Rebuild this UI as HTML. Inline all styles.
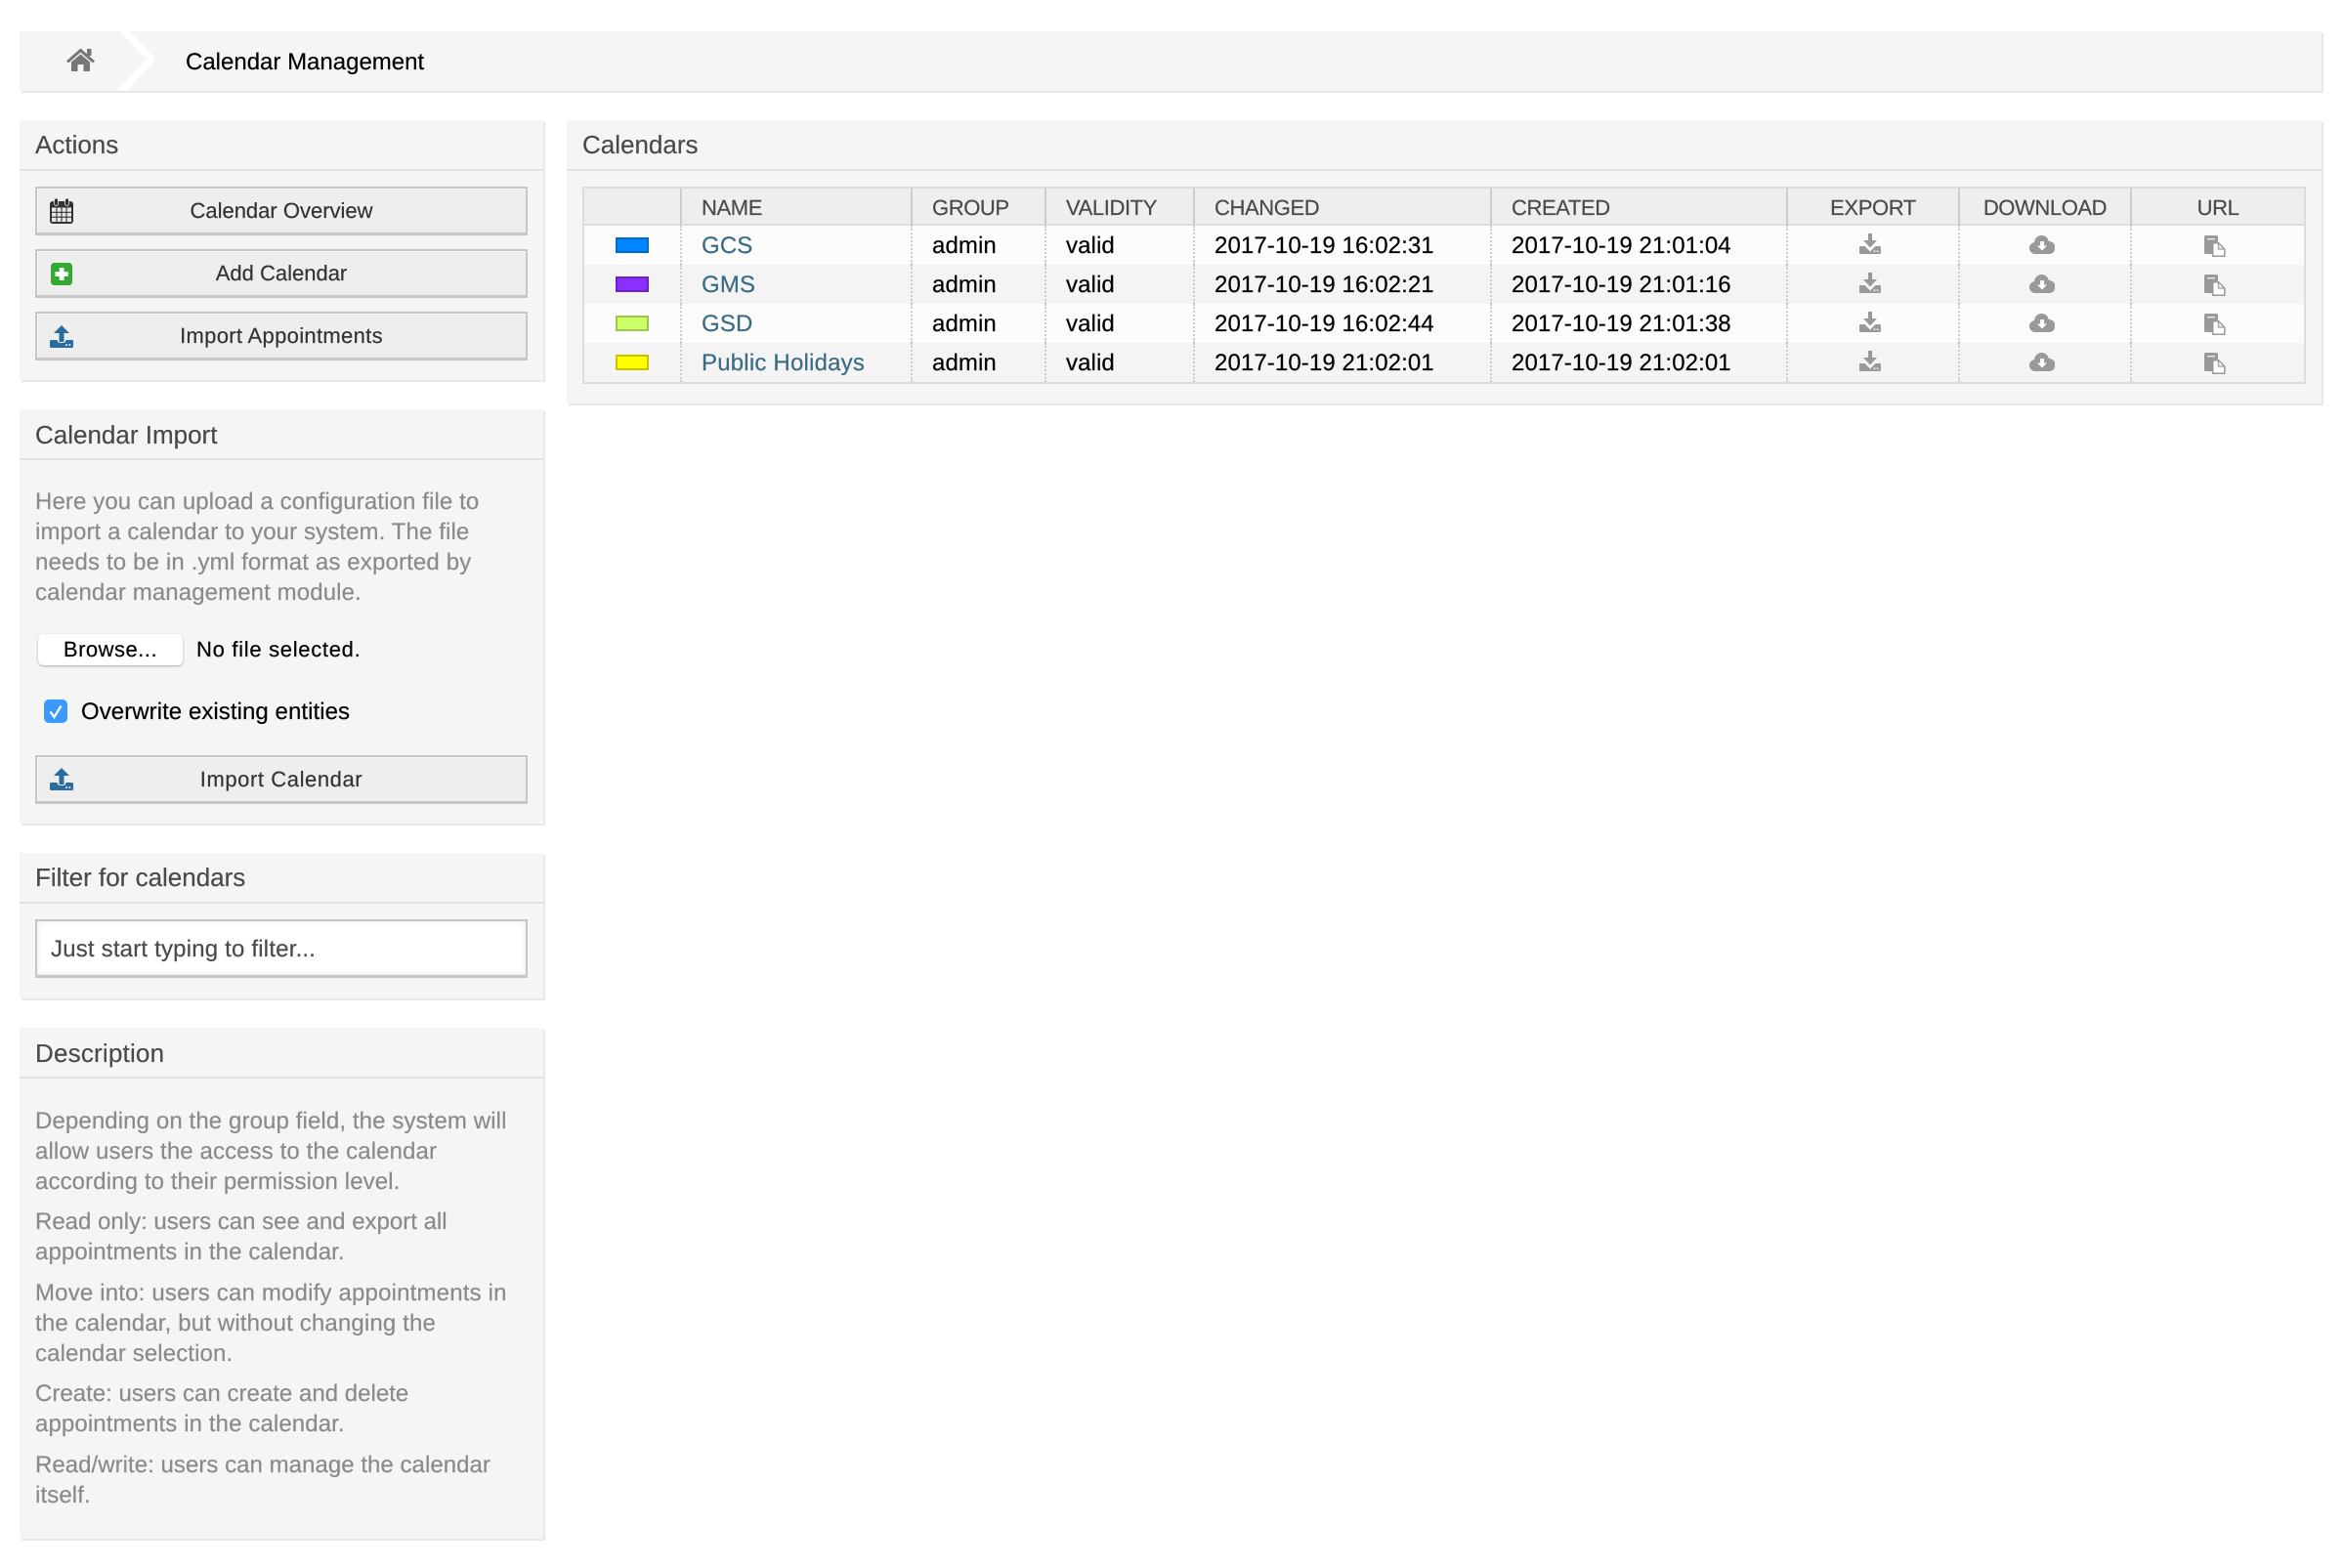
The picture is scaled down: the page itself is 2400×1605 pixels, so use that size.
<!DOCTYPE html>
<html lang="en">
<head>
<meta charset="utf-8">
<title>Calendar Management</title>
<style>
html,body{margin:0;padding:0;background:#fff;}
body{position:relative;width:2400px;height:1605px;overflow:hidden;font-family:"Liberation Sans",Arial,sans-serif;font-size:24px;text-rendering:geometricPrecision;color:#000;-webkit-text-stroke:.2px;}
.box{position:absolute;background:#f5f5f5;box-shadow:2px 2px 0 #e8e8e8;}
.line{position:absolute;left:20px;height:2px;background:#e0e0e0;}
.t{position:absolute;white-space:nowrap;line-height:30px;}
.h{font-size:26px;color:#4a4a4a;text-shadow:0 1px 0 #fff;}
.g{color:#8a8a8a;left:36px;letter-spacing:.11px;}
.btn{position:absolute;left:36px;width:504px;height:50px;box-sizing:border-box;background:#eee;border:2px solid #c6c6c6;border-bottom-width:3px;box-shadow:inset 1px 1px 0 #f8f8f8;}
.bt{left:36px;width:504px;text-align:center;font-size:22px;color:#333;}
.sys{letter-spacing:.58px;}
svg{position:absolute;display:block;}
#tw{position:absolute;left:596px;top:191px;width:1764px;height:202px;box-sizing:border-box;border:2px solid #ddd;}
table{border-collapse:separate;border-spacing:0;table-layout:fixed;width:1760px;}
th{font-size:22px;font-weight:normal;color:#4a4a4a;background:#eee;text-align:left;line-height:25px;padding:7px 0 4px 20px;border-left:2px solid #ccc;border-bottom:2px solid #ddd;white-space:nowrap;letter-spacing:-.4px;}
th.c{text-align:center;padding-left:0;}
td{position:relative;line-height:27px;padding:7px 0 6px 20px;border-left:2px dotted #ccc;vertical-align:top;white-space:nowrap;letter-spacing:.1px;}
th:first-child,td:first-child{border-left:0;padding:0;}
th:first-child{height:36px;}
tr.o td{background:#fcfcfc;}
tr.e td{background:#f4f4f4;}
a{color:#3a6b85;text-decoration:none;letter-spacing:.15px;}
.sw{position:absolute;left:32px;top:12px;width:34px;height:16px;box-sizing:border-box;border:2px solid;}
</style>
</head>
<body>
<svg width="0" height="0" style="position:absolute">
<defs>
<symbol id="exp" viewBox="0 0 22 21"><rect x="9" y="0" width="4" height="8" fill="#999"/><polygon points="4,7 18,7 11,14.5" fill="#999"/><path d="M1.5,13H5.5L11,18.5L16.5,13H20.5Q22,13 22,14.5V19.5Q22,21 20.5,21H1.5Q0,21 0,19.5V14.5Q0,13 1.5,13Z" fill="#999"/><circle cx="15.5" cy="18.2" r="1" fill="#eee"/><circle cx="18.6" cy="18.2" r="1" fill="#eee"/></symbol>
<symbol id="cld" viewBox="0 0 26 19"><circle cx="12.5" cy="7.5" r="7.5" fill="#999"/><circle cx="6" cy="13" r="6" fill="#999"/><circle cx="20" cy="12.5" r="6.5" fill="#999"/><rect x="6" y="10" width="14" height="9" fill="#999"/><rect x="11" y="6" width="4" height="5" fill="#fff"/><polygon points="8,10.5 18,10.5 13,15.5" fill="#fff"/></symbol>
<symbol id="fil" viewBox="0 0 22 22"><path d="M1.5,0H12.5Q14,0 14,1.5V19H1.5Q0,19 0,17.5V1.5Q0,0 1.5,0Z" fill="#999"/><rect x="3" y="3" width="8" height="1.3" fill="#eee"/><path d="M8.7,7.7H14.5L20.8,14V21.2H8.7Z" fill="#fdfdfd" stroke="#999" stroke-width="1.5"/><path d="M14.5,8V14H20.5" fill="none" stroke="#999" stroke-width="1.2"/></symbol>
<symbol id="upl" viewBox="0 0 24 23"><polygon points="12,0 20,8 4,8" fill="#2a6c9e"/><path d="M1.5,15H22.5Q24,15 24,16.5V21.5Q24,23 22.5,23H1.5Q0,23 0,21.5V16.5Q0,15 1.5,15Z" fill="#2a6c9e"/><rect x="7.5" y="12" width="9" height="6" rx="3" fill="#eee"/><rect x="9.5" y="7" width="5" height="10" fill="#2a6c9e"/><circle cx="17" cy="20" r="1" fill="#eee"/><circle cx="20.3" cy="20" r="1" fill="#eee"/></symbol>
</defs>
</svg>

<div class="box" style="left:20px;top:32px;width:2356px;height:61px;"></div>
<svg style="left:0;top:0" width="200" height="100" viewBox="0 0 200 100">
<polygon points="122,32 132,32 160,61 130,93 119,93 150,61" fill="#fff"/>
<path d="M69,63.5L82.5,51.5L96,63.5" fill="none" stroke="#777" stroke-width="3"/>
<rect x="89" y="50" width="4.5" height="7" fill="#777"/>
<path d="M73,63.5L82.5,55.5L92,63.5V73H85.5V66H79.5V73H73Z" fill="#777"/>
</svg>
<div class="t" style="left:190px;top:49px;">Calendar Management</div>

<!-- Actions -->
<div class="box" style="left:20px;top:123px;width:536px;height:266px;"></div>
<div class="line" style="top:173px;width:536px;"></div>
<div class="t h" style="left:36px;top:133px;">Actions</div>
<div class="btn" style="top:191px;"></div>
<div class="t bt" style="top:201px;">Calendar Overview</div>
<svg style="left:51px;top:203px" width="24" height="26" viewBox="0 0 24 26">
<rect x="0" y="3" width="24" height="23" rx="3" fill="#333"/>
<rect x="2" y="9.5" width="20" height="14.5" fill="#e8e8e8"/>
<path d="M7,9.5V24M12,9.5V24M17,9.5V24M2,14.3H22M2,19.2H22" stroke="#333" stroke-width="1.1"/>
<rect x="4.5" y="0" width="4" height="7.5" rx="2" fill="#333" stroke="#eee" stroke-width=".8"/>
<rect x="15.5" y="0" width="4" height="7.5" rx="2" fill="#333" stroke="#eee" stroke-width=".8"/>
</svg>
<div class="btn" style="top:255px;"></div>
<div class="t bt" style="top:265px;">Add Calendar</div>
<svg style="left:52px;top:269px" width="22" height="23" viewBox="0 0 22 23">
<rect width="22" height="23" rx="3.5" fill="#33aa33"/>
<rect x="8.7" y="5" width="4.8" height="13" fill="#fff"/>
<rect x="4.5" y="9.2" width="13.2" height="4.8" fill="#fff"/>
</svg>
<div class="btn" style="top:319px;"></div>
<div class="t bt" style="top:329px;letter-spacing:.32px;">Import Appointments</div>
<svg style="left:51px;top:333px" width="24" height="23"><use href="#upl"/></svg>

<!-- Calendar Import -->
<div class="box" style="left:20px;top:419px;width:536px;height:424px;"></div>
<div class="line" style="top:469px;width:536px;"></div>
<div class="t h" style="left:36px;top:430px;">Calendar Import</div>
<div class="t g" style="top:499px;">Here you can upload a configuration file to</div>
<div class="t g" style="top:530px;">import a calendar to your system. The file</div>
<div class="t g" style="top:561px;letter-spacing:.15px;">needs to be in .yml format as exported by</div>
<div class="t g" style="top:592px;">calendar management module.</div>
<div style="position:absolute;left:39px;top:649px;width:148px;height:32px;background:#fff;border-radius:5px;box-shadow:0 1px 2px rgba(0,0,0,.3);"></div>
<div class="t sys" style="left:39px;width:148px;text-align:center;top:650px;font-size:22px;letter-spacing:.5px;">Browse...</div>
<div class="t sys" style="left:201px;top:650px;font-size:22px;letter-spacing:.7px;">No file selected.</div>
<div style="position:absolute;left:45px;top:716px;width:24px;height:24px;background:#3b99fc;border-radius:5px;"></div>
<svg style="left:45px;top:716px" width="24" height="24" viewBox="0 0 24 24"><path d="M6.5,12.5L10.5,18L17.5,6.5" fill="none" stroke="#fff" stroke-width="2.2"/></svg>
<div class="t" style="left:83px;top:714px;letter-spacing:.06px;">Overwrite existing entities</div>
<div class="btn" style="top:773px;"></div>
<div class="t bt sys" style="top:783px;">Import Calendar</div>
<svg style="left:51px;top:786px" width="24" height="23"><use href="#upl"/></svg>

<!-- Filter -->
<div class="box" style="left:20px;top:873px;width:536px;height:149px;"></div>
<div class="line" style="top:923px;width:536px;"></div>
<div class="t h" style="left:36px;top:883px;">Filter for calendars</div>
<div style="position:absolute;left:36px;top:941px;width:504px;height:60px;box-sizing:border-box;background:#fff;border:2px solid #c6c6c6;border-bottom-width:3px;box-shadow:inset 0 0 6px #e6e6e6;"></div>
<div class="t" style="left:52px;top:957px;color:#4a4a4a;letter-spacing:.19px;">Just start typing to filter...</div>

<!-- Description -->
<div class="box" style="left:20px;top:1052px;width:536px;height:523px;"></div>
<div class="line" style="top:1102px;width:536px;"></div>
<div class="t h" style="left:36px;top:1063px;letter-spacing:.2px;">Description</div>
<div class="t g" style="top:1133px;">Depending on the group field, the system will</div>
<div class="t g" style="top:1164px;">allow users the access to the calendar</div>
<div class="t g" style="top:1195px;">according to their permission level.</div>
<div class="t g" style="top:1236px;letter-spacing:0;">Read only: users can see and export all</div>
<div class="t g" style="top:1267px;">appointments in the calendar.</div>
<div class="t g" style="top:1309px;letter-spacing:.18px;">Move into: users can modify appointments in</div>
<div class="t g" style="top:1340px;letter-spacing:.15px;">the calendar, but without changing the</div>
<div class="t g" style="top:1371px;">calendar selection.</div>
<div class="t g" style="top:1412px;letter-spacing:.02px;">Create: users can create and delete</div>
<div class="t g" style="top:1443px;">appointments in the calendar.</div>
<div class="t g" style="top:1485px;letter-spacing:.04px;">Read/write: users can manage the calendar</div>
<div class="t g" style="top:1516px;">itself.</div>

<!-- Calendars -->
<div class="box" style="left:580px;top:123px;width:1796px;height:290px;"></div>
<div class="line" style="left:580px;top:173px;width:1796px;"></div>
<div class="t h" style="left:596px;top:133px;">Calendars</div>
<div id="tw">
<table>
<colgroup><col style="width:98px"><col style="width:236px"><col style="width:137px"><col style="width:152px"><col style="width:304px"><col style="width:303px"><col style="width:176px"><col style="width:176px"><col style="width:178px"></colgroup>
<thead><tr><th></th><th>NAME</th><th>GROUP</th><th>VALIDITY</th><th>CHANGED</th><th>CREATED</th><th class="c">EXPORT</th><th class="c">DOWNLOAD</th><th class="c">URL</th></tr></thead>
<tbody>
<tr class="o"><td><div class="sw" style="background:#0084ff;border-color:#006cc4;"></div></td><td><a>GCS</a></td><td>admin</td><td>valid</td><td>2017-10-19 16:02:31</td><td>2017-10-19 21:01:04</td><td><svg style="left:73px;top:8px" width="22" height="21"><use href="#exp"/></svg></td><td><svg style="left:71px;top:10px" width="26" height="19"><use href="#cld"/></svg></td><td><svg style="left:74px;top:10px" width="22" height="22"><use href="#fil"/></svg></td></tr>
<tr class="e"><td><div class="sw" style="background:#8b2fff;border-color:#6a22c2;"></div></td><td><a>GMS</a></td><td>admin</td><td>valid</td><td>2017-10-19 16:02:21</td><td>2017-10-19 21:01:16</td><td><svg style="left:73px;top:8px" width="22" height="21"><use href="#exp"/></svg></td><td><svg style="left:71px;top:10px" width="26" height="19"><use href="#cld"/></svg></td><td><svg style="left:74px;top:10px" width="22" height="22"><use href="#fil"/></svg></td></tr>
<tr class="o"><td><div class="sw" style="background:#ccff66;border-color:#a0c44e;"></div></td><td><a>GSD</a></td><td>admin</td><td>valid</td><td>2017-10-19 16:02:44</td><td>2017-10-19 21:01:38</td><td><svg style="left:73px;top:8px" width="22" height="21"><use href="#exp"/></svg></td><td><svg style="left:71px;top:10px" width="26" height="19"><use href="#cld"/></svg></td><td><svg style="left:74px;top:10px" width="22" height="22"><use href="#fil"/></svg></td></tr>
<tr class="e"><td><div class="sw" style="background:#ffff00;border-color:#c4c400;"></div></td><td><a style="letter-spacing:.2px">Public Holidays</a></td><td>admin</td><td>valid</td><td>2017-10-19 21:02:01</td><td>2017-10-19 21:02:01</td><td><svg style="left:73px;top:8px" width="22" height="21"><use href="#exp"/></svg></td><td><svg style="left:71px;top:10px" width="26" height="19"><use href="#cld"/></svg></td><td><svg style="left:74px;top:10px" width="22" height="22"><use href="#fil"/></svg></td></tr>
</tbody>
</table>
</div>
</body>
</html>
